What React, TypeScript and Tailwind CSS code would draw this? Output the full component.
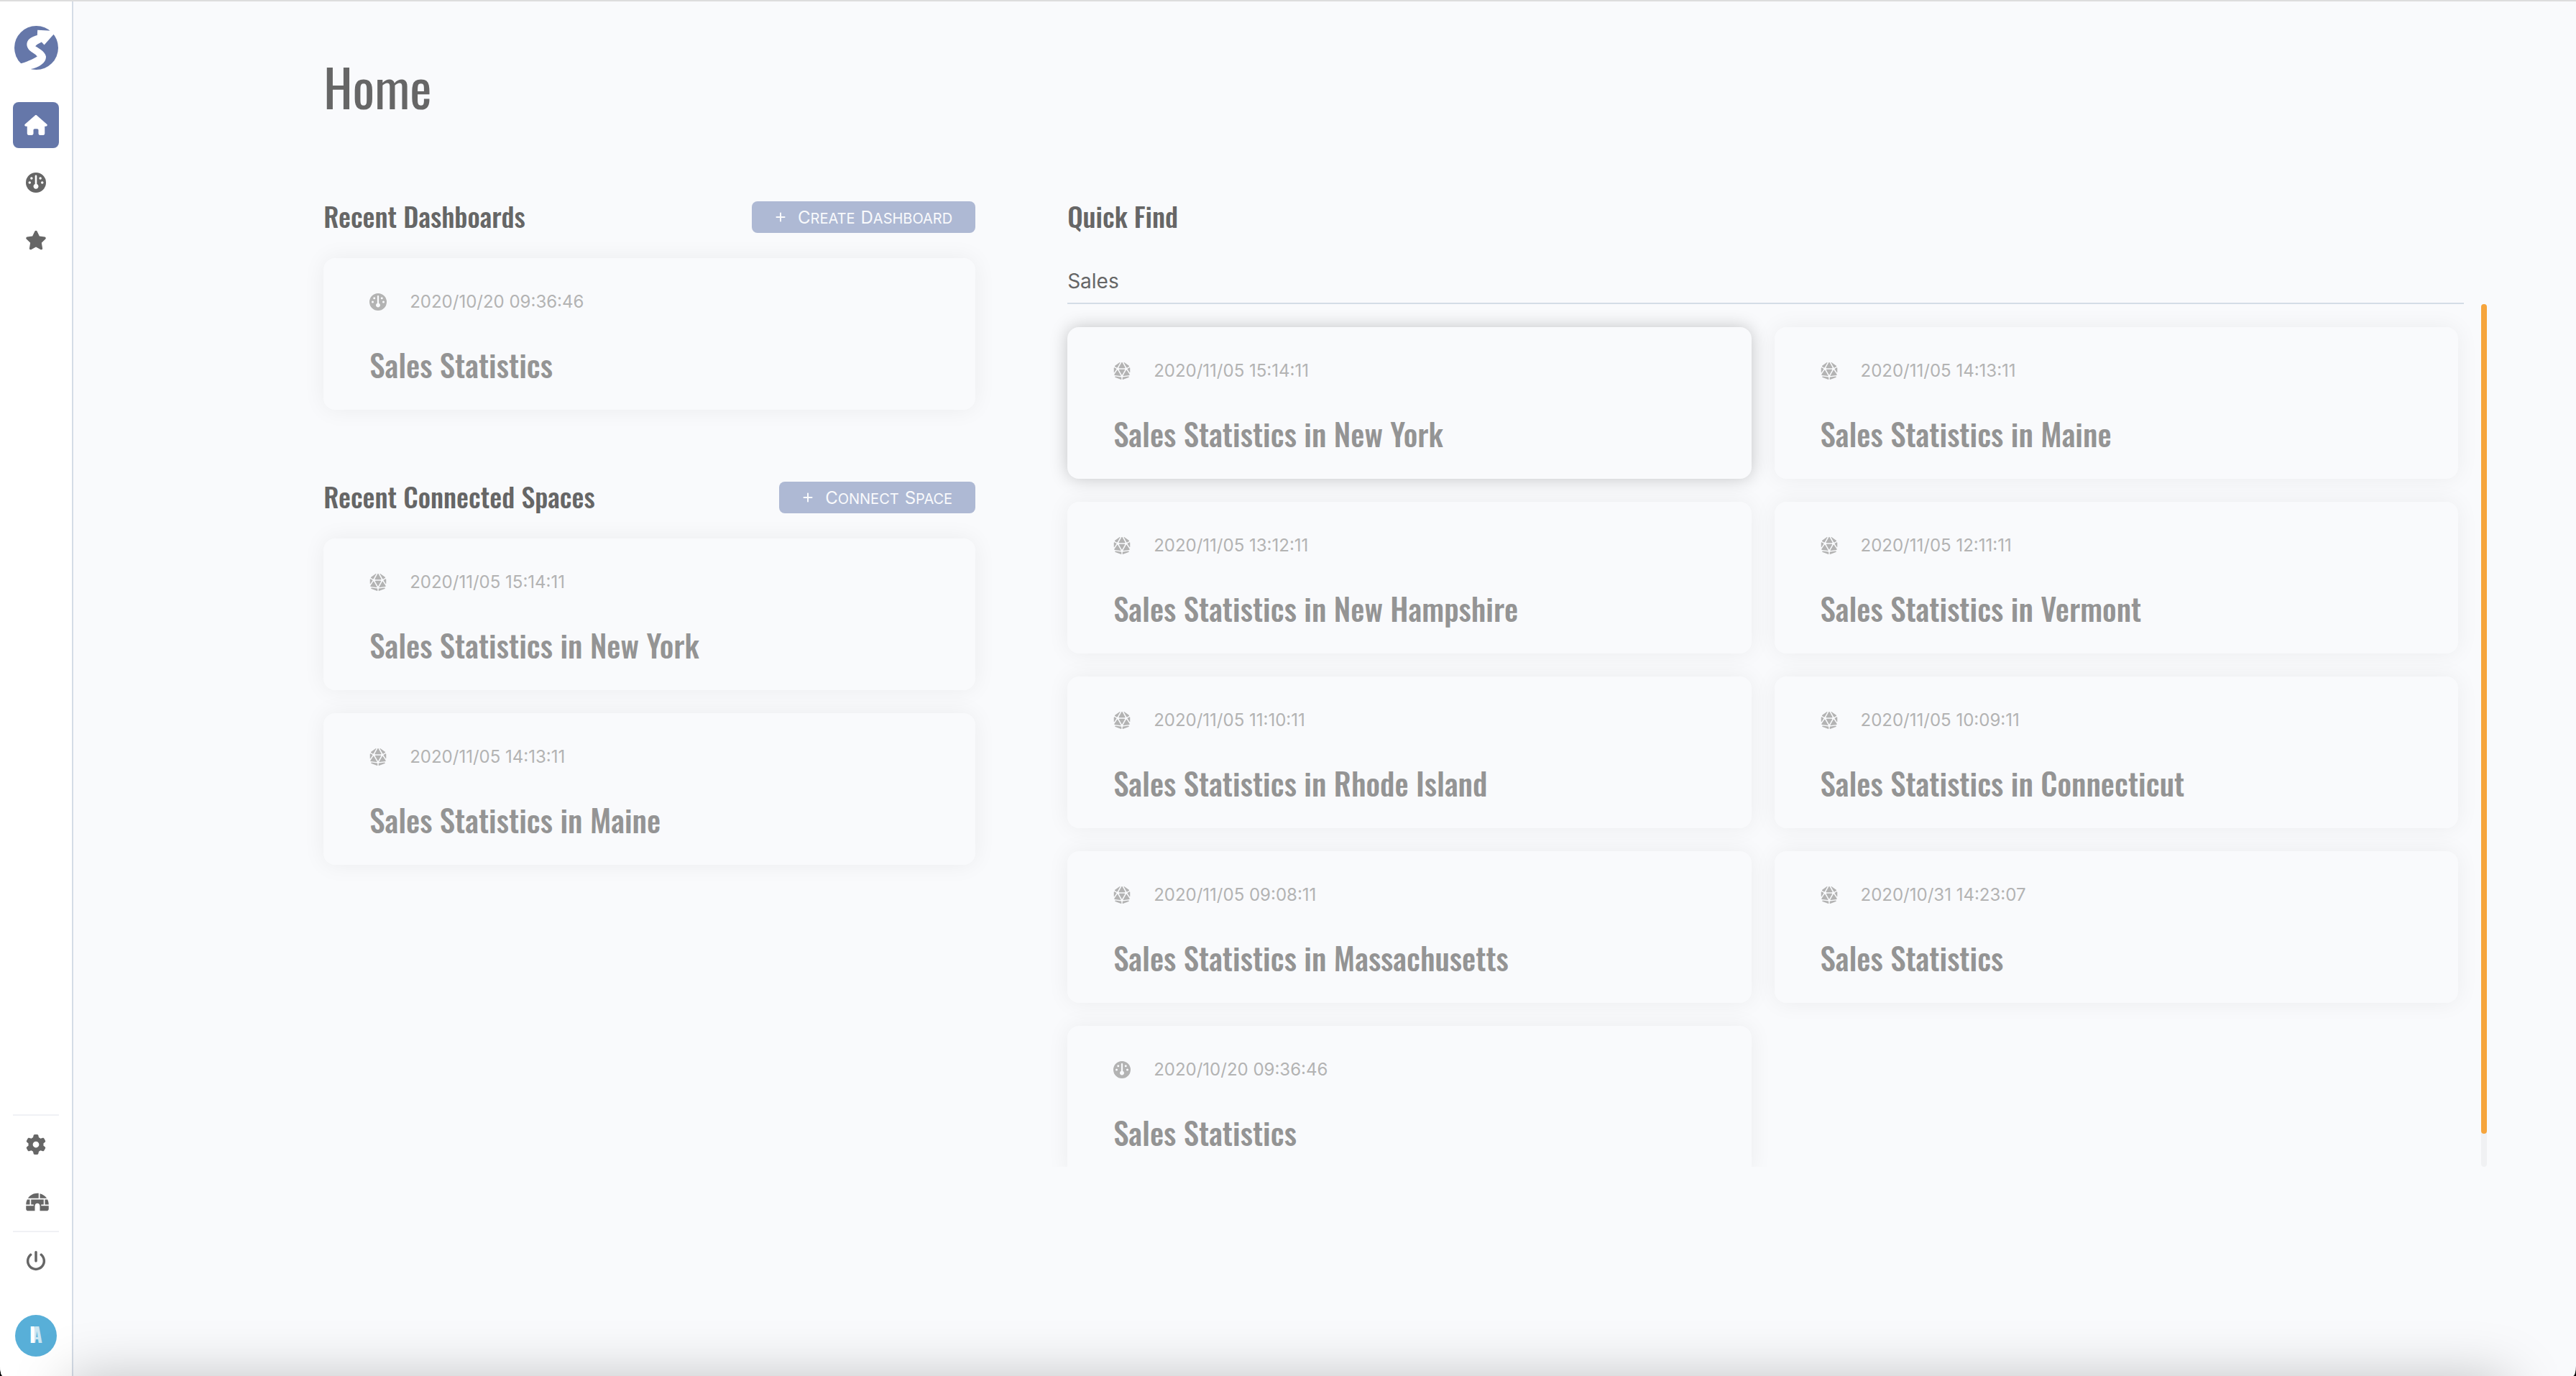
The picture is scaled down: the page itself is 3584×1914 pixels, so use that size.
import React from "react";
import { FaDiceD20, FaGauge, FaGear, FaHouse, FaIgloo, FaPlus, FaPowerOff, FaStar } from "react-icons/fa6";

type Kind = "dashboard" | "space";
type Item = { kind: Kind; date: string; title: string; active?: boolean };

const dashboards: Item[] = [{ kind: "dashboard", date: "2020/10/20 09:36:46", title: "Sales Statistics" }];

const spaces: Item[] = [
  { kind: "space", date: "2020/11/05 15:14:11", title: "Sales Statistics in New York" },
  { kind: "space", date: "2020/11/05 14:13:11", title: "Sales Statistics in Maine" },
];

const results: Item[] = [
  { kind: "space", date: "2020/11/05 15:14:11", title: "Sales Statistics in New York", active: true },
  { kind: "space", date: "2020/11/05 14:13:11", title: "Sales Statistics in Maine" },
  { kind: "space", date: "2020/11/05 13:12:11", title: "Sales Statistics in New Hampshire" },
  { kind: "space", date: "2020/11/05 12:11:11", title: "Sales Statistics in Vermont" },
  { kind: "space", date: "2020/11/05 11:10:11", title: "Sales Statistics in Rhode Island" },
  { kind: "space", date: "2020/11/05 10:09:11", title: "Sales Statistics in Connecticut" },
  { kind: "space", date: "2020/11/05 09:08:11", title: "Sales Statistics in Massachusetts" },
  { kind: "space", date: "2020/10/31 14:23:07", title: "Sales Statistics" },
  { kind: "dashboard", date: "2020/10/20 09:36:46", title: "Sales Statistics" },
];

const heading = "font-['Oswald','Roboto',sans-serif]";

function Logo() {
  return (
    <svg viewBox="0 0 182 182" className="size-[61px]" aria-hidden="true">
      <circle cx="91" cy="91" r="91" fill="#6577a9" />
      <path
        d="M20 159C48 150 76 140 95 127C87 117 72 110 62 101C44 82 50 55 78 45Q88 41 95 39L96 17L152 20L170 27L163 35L124 79L113 67C101 73 92 78 87 84C104 95 126 105 131 126C134 150 106 172 65 180Q38 184 20 159Z"
        fill="#fff"
      />
    </svg>
  );
}

function Card({ item }: { item: Item }) {
  return (
    <a
      href="#"
      className={
        item.active
          ? "flex h-[211px] flex-col rounded-2xl bg-[#f9fafc] px-16 pt-[45px] shadow-[0_0_24px_rgba(0,0,0,0.22)]"
          : "flex h-[211px] flex-col rounded-2xl bg-[#f9fafc] px-16 pt-[45px] shadow-[0_0_32px_rgba(0,0,0,0.06)]"
      }
    >
      <span className="flex h-8 items-center gap-8 text-2xl text-[#b3b3b3]">
        {item.kind === "dashboard" ? <FaGauge className="size-6" /> : <FaDiceD20 className="size-6" />}
        <time>{item.date}</time>
      </span>
      <span className={`${heading} mt-[43px] text-[43px] leading-[56px] font-medium whitespace-nowrap text-[#949494]`}>
        {item.title}
      </span>
    </a>
  );
}

function Section({ title, action, items }: { title: string; action: string; items: Item[] }) {
  return (
    <section>
      <div className="mb-[35px] flex h-11 items-center justify-between">
        <h2 className={`${heading} pb-[3px] text-[38px] font-medium whitespace-nowrap`}>{title}</h2>
        <button
          type="button"
          className="flex h-11 items-center gap-4 rounded-lg bg-[#aeb9d4] px-8 whitespace-nowrap text-[#f9fafc]"
        >
          <FaPlus className="size-4" />
          <span className="flex gap-2 pt-0.5 text-[20px] uppercase">
            {action.split(" ").map((word) => (
              <span key={word} className="block first-letter:text-2xl">
                {word}
              </span>
            ))}
          </span>
        </button>
      </div>
      <div className="flex flex-col gap-8">
        {items.map((item) => (
          <Card key={item.date} item={item} />
        ))}
      </div>
    </section>
  );
}

const navButton = "flex size-16 items-center justify-center rounded-lg";

function Sidebar() {
  return (
    <aside className="flex w-[102px] shrink-0 flex-col border-r-2 border-[#d4dce6] bg-white pb-[27px] text-[28px] text-[#666]">
      <a href="#" aria-label="Start" className="mt-[34px] flex justify-center">
        <Logo />
      </a>
      <nav className="mt-[45px] flex flex-col items-center gap-4">
        <button type="button" aria-label="Home" className={`${navButton} bg-[#6577a9] text-white`}>
          <FaHouse className="w-8" />
        </button>
        <button type="button" aria-label="Dashboards" className={navButton}>
          <FaGauge />
        </button>
        <button type="button" aria-label="Favorites" className={navButton}>
          <FaStar className="w-[30px]" />
        </button>
      </nav>
      <div className="mt-auto flex flex-col items-center">
        <hr className="w-16 border-t-2 border-[#f0f1f5]" />
        <button type="button" aria-label="Settings" className={`${navButton} mt-2`}>
          <FaGear />
        </button>
        <button type="button" aria-label="Console" className={`${navButton} mt-4 pl-1`}>
          <FaIgloo className="w-8" />
        </button>
        <hr className="mt-2 w-16 border-t-2 border-[#f0f1f5]" />
        <button type="button" aria-label="Sign out" className={`${navButton} mt-2`}>
          <FaPowerOff />
        </button>
        <button
          type="button"
          aria-label="Account"
          className={`${heading} mt-[43px] flex size-[58px] items-center justify-center rounded-full bg-[#58afd8] pb-1 text-[28px] font-bold text-white`}
        >
          I<span className="-ml-1.5 text-white/70">A</span>
        </button>
      </div>
    </aside>
  );
}

export default function App() {
  return (
    <div className="bg-black">
      <div className="relative flex min-h-screen overflow-hidden border-t-2 border-[#dddddd] bg-[#f9fafc] font-['Inter','Noto_Sans',sans-serif] text-[#666] [border-bottom-left-radius:4px_14px] [border-bottom-right-radius:4px_14px]">
        <Sidebar />
        <div className="min-w-0 flex-1">
          <main className="pr-[124px] pl-[10%]">
            <h1 className={`${heading} pt-[62px] text-[72px] leading-[112px]`}>Home</h1>
            <div className="mt-[104px] grid grid-cols-[907fr_1975fr] gap-32">
              <div className="flex flex-col gap-[100px]">
                <Section title="Recent Dashboards" action="Create Dashboard" items={dashboards} />
                <Section title="Recent Connected Spaces" action="Connect Space" items={spaces} />
              </div>
              <section className="min-w-0">
                <h2 className={`${heading} flex h-11 items-center pb-[3px] text-[38px] font-medium`}>
                  <label htmlFor="quick-find">Quick Find</label>
                </h2>
                <div className="mt-9 pr-8">
                  <input
                    id="quick-find"
                    type="text"
                    defaultValue="Sales"
                    className="block h-[63px] w-full border-b-2 border-[#d4dde6] bg-transparent text-[28px] outline-none"
                  />
                </div>
                <div className="-ml-8 flex h-[calc(100vh-714px)]">
                  <div className="min-w-0 flex-1 overflow-hidden pr-8 pl-8">
                    <div className="mt-8 grid grid-cols-2 gap-8">
                      {results.map((item) => (
                        <Card key={item.date} item={item} />
                      ))}
                    </div>
                  </div>
                  <div className="w-2 rounded bg-[#f0f1f3]">
                    <div className="h-[96.2%] rounded bg-[#f6a53d]" />
                  </div>
                </div>
              </section>
            </div>
          </main>
        </div>
        <div className="pointer-events-none absolute right-24 -bottom-[166px] left-24 h-40 shadow-[0_0_80px_rgba(0,0,0,0.25)]" />
      </div>
    </div>
  );
}
